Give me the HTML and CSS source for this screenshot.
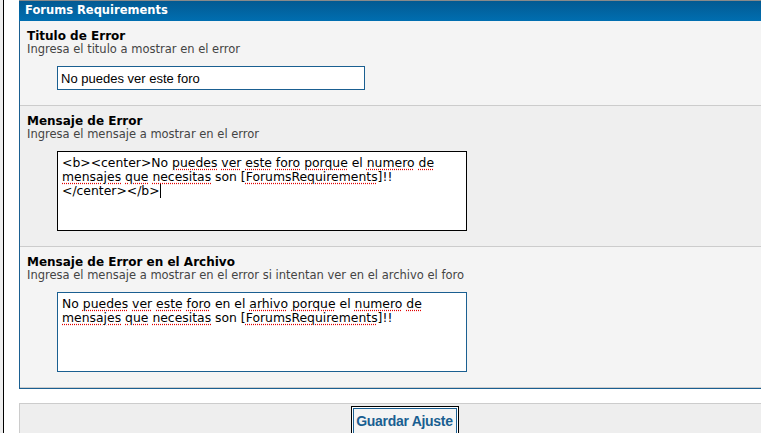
FILE: index.html
```html
<!DOCTYPE html>
<html lang="es">
<head>
  <meta charset="UTF-8" />
  <title>Forums Requirements</title>
  <link rel="stylesheet" href="styles.css">
</head>
<body>
  <div class="page">
    <div class="content">

      <div class="panel">
        <div class="panel-head">Forums Requirements</div>

        <div class="row">
          <div class="row-title">Titulo de Error</div>
          <div class="row-desc">Ingresa el titulo a mostrar en el error</div>
          <div class="field">
            <input class="text-input" type="text" value="No puedes ver este foro">
          </div>
        </div>

        <div class="row alt">
          <div class="row-title">Mensaje de Error</div>
          <div class="row-desc">Ingresa el mensaje a mostrar en el error</div>
          <div class="field">
            <div class="text-area focused">&lt;b&gt;&lt;center&gt;No <span class="typo">puedes</span> <span class="typo">ver</span> <span class="typo">este</span> <span class="typo">foro</span> <span class="typo">porque</span> el <span class="typo">numero</span> <span class="typo">de</span> <span class="typo">mensajes</span> <span class="typo">que</span> <span class="typo">necesitas</span> son [<span class="typo">ForumsRequirements</span>]!!<br>&lt;/center&gt;&lt;/b&gt;<span class="caret"></span></div>
          </div>
        </div>

        <div class="row">
          <div class="row-title">Mensaje de Error en el Archivo</div>
          <div class="row-desc">Ingresa el mensaje a mostrar en el error si intentan ver en el archivo el foro</div>
          <div class="field">
            <div class="text-area">No <span class="typo">puedes</span> <span class="typo">ver</span> <span class="typo">este</span> <span class="typo">foro</span> en el <span class="typo">arhivo</span> <span class="typo">porque</span> el <span class="typo">numero</span> <span class="typo">de</span> <span class="typo">mensajes</span> <span class="typo">que</span> <span class="typo">necesitas</span> son [<span class="typo">ForumsRequirements</span>]!!</div>
          </div>
        </div>
      </div>

      <div class="actions">
        <button class="save-btn">Guardar Ajuste</button>
      </div>

    </div>
  </div>
</body>
</html>
```

FILE: styles.css
```css
* {
  box-sizing: border-box;
}
body {
  margin: 0;
  background: #fff;
  font-family: 'DejaVu Sans', Verdana, sans-serif;
  overflow: hidden;
}

/* thin frame on the left side; the page is wider than the window */
.page {
  border-left: 3px solid #eeeeee;
  min-height: 433px;
  width: 804px;
}
.content {
  border-left: 1px solid #000;
  padding-left: 15px;
  padding-right: 14px;
  min-height: 433px;
}

.panel {
  border: 1px solid #1a5f91;
  border-top: none;
}

.panel-head {
  height: 21px;
  border-top: 1px solid #8a8a8a;
  background: linear-gradient(#035a92, #006eb0);
  color: #fff;
  font-weight: bold;
  font-size: 11.5px;
  line-height: 15px;
  padding: 2px 5px 2px 6px;
  margin-left: -1px;
}

.row {
  background: #f4f4f4;
  border-bottom: 1px solid #cccccc;
  padding: 8px 7px 16px;
}
.row:nth-child(2) {
  height: 85px;
}
.row.alt {
  background: #efefef;
  height: 141px;
}
.row:last-child {
  height: 141px;
}

.row-title {
  font-weight: bold;
  font-size: 12px;
  color: #000;
  line-height: 14px;
}
.row-desc {
  font-size: 11.5px;
  color: #444;
  line-height: 13px;
}

.field {
  padding-left: 30px;
  margin-top: 10px;
}

.text-input {
  width: 308px;
  height: 24px;
  border: 1px solid #1a5f91;
  background: #fff;
  padding: 1px 3px;
  font-family: 'Liberation Sans', Arial, sans-serif;
  font-size: 13px;
  color: #000;
  outline: none;
}

.text-area {
  width: 410px;
  height: 80px;
  border: 1px solid #1a5f91;
  background: #fff;
  padding: 4px 4px;
  font-family: 'DejaVu Sans', Verdana, sans-serif;
  font-size: 12.4px;
  line-height: 14px;
  color: #000;
}
.text-area.focused {
  border-color: #000;
}

.typo {
  text-decoration: underline dotted #e00000;
  text-underline-offset: 2px;
}

.caret {
  display: inline-block;
  width: 1px;
  height: 14px;
  background: #000;
  vertical-align: -3px;
}

.actions {
  margin-top: 14px;
  border: 1px solid #cccccc;
  border-bottom: none;
  background: #eeeeee;
  text-align: center;
  padding-top: 2px;
  height: 40px;
}

.save-btn {
  border: 1px solid #000;
  box-shadow: inset 0 0 0 1px #fff, inset 0 0 0 2px #1a5f91;
  background: #f4f4f4;
  color: #1a5f91;
  font-family: 'Liberation Sans', Arial, sans-serif;
  font-weight: bold;
  font-size: 14px;
  letter-spacing: -0.3px;
  white-space: nowrap;
  padding: 0;
  width: 108px;
  height: 30px;
  cursor: pointer;
}
```
